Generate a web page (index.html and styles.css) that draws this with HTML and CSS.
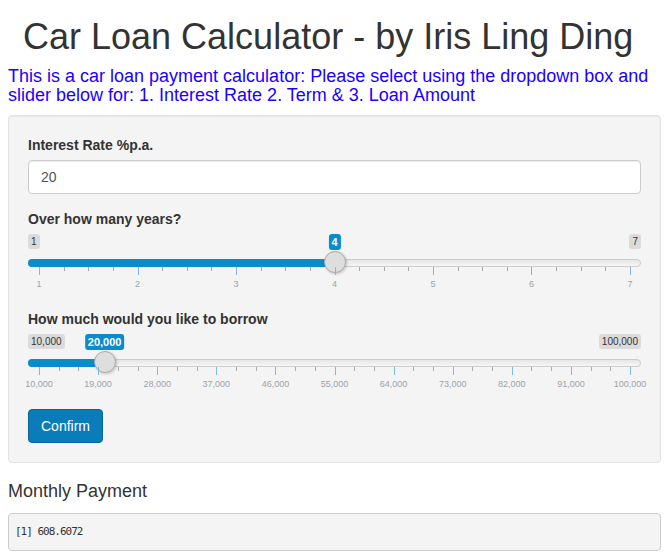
FILE: index.html
```html
<!DOCTYPE html>
<html>
<head>
<meta charset="utf-8">
<title>Car Loan Calculator</title>
<link rel="stylesheet" href="styles.css">
</head>
<body>
<div class="page">
  <h1 class="title">Car Loan Calculator - by Iris Ling Ding</h1>
  <p class="intro">This is a car loan payment calculator: Please select using the dropdown box and slider below for: 1. Interest Rate 2. Term &amp; 3. Loan Amount</p>

  <div class="well">
    <div class="form-group">
      <label class="control-label">Interest Rate %p.a.</label>
      <input class="form-control" type="text" value="20">
    </div>

    <div class="form-group">
      <label class="control-label">Over how many years?</label>
      <div class="irs" style="--p:0.5">
        <span class="irs-line"></span>
        <span class="irs-bar"></span>
        <span class="irs-min">1</span>
        <span class="irs-max">7</span>
        <span class="irs-single">4</span>
        <span class="irs-handle"></span>
        <div class="irs-grid">
          <span class="pol" style="left:0%"></span>
          <span class="pol small" style="left:4.1667%"></span>
          <span class="pol small" style="left:8.3333%"></span>
          <span class="pol small" style="left:12.5%"></span>
          <span class="pol" style="left:16.6667%"></span>
          <span class="pol small" style="left:20.8333%"></span>
          <span class="pol small" style="left:25%"></span>
          <span class="pol small" style="left:29.1667%"></span>
          <span class="pol" style="left:33.3333%"></span>
          <span class="pol small" style="left:37.5%"></span>
          <span class="pol small" style="left:41.6667%"></span>
          <span class="pol small" style="left:45.8333%"></span>
          <span class="pol" style="left:50%"></span>
          <span class="pol small" style="left:54.1667%"></span>
          <span class="pol small" style="left:58.3333%"></span>
          <span class="pol small" style="left:62.5%"></span>
          <span class="pol" style="left:66.6667%"></span>
          <span class="pol small" style="left:70.8333%"></span>
          <span class="pol small" style="left:75%"></span>
          <span class="pol small" style="left:79.1667%"></span>
          <span class="pol" style="left:83.3333%"></span>
          <span class="pol small" style="left:87.5%"></span>
          <span class="pol small" style="left:91.6667%"></span>
          <span class="pol small" style="left:95.8333%"></span>
          <span class="pol" style="left:100%"></span>
          <span class="gtext" style="left:0%">1</span>
          <span class="gtext" style="left:16.6667%">2</span>
          <span class="gtext" style="left:33.3333%">3</span>
          <span class="gtext" style="left:50%">4</span>
          <span class="gtext" style="left:66.6667%">5</span>
          <span class="gtext" style="left:83.3333%">6</span>
          <span class="gtext" style="left:100%">7</span>
        </div>
      </div>
    </div>

    <div class="form-group">
      <label class="control-label">How much would you like to borrow</label>
      <div class="irs" style="--p:0.1111">
        <span class="irs-line"></span>
        <span class="irs-bar"></span>
        <span class="irs-min">10,000</span>
        <span class="irs-max">100,000</span>
        <span class="irs-single">20,000</span>
        <span class="irs-handle"></span>
        <div class="irs-grid">
          <span class="pol" style="left:0%"></span>
          <span class="pol small" style="left:3.3333%"></span>
          <span class="pol small" style="left:6.6667%"></span>
          <span class="pol" style="left:10%"></span>
          <span class="pol small" style="left:13.3333%"></span>
          <span class="pol small" style="left:16.6667%"></span>
          <span class="pol" style="left:20%"></span>
          <span class="pol small" style="left:23.3333%"></span>
          <span class="pol small" style="left:26.6667%"></span>
          <span class="pol" style="left:30%"></span>
          <span class="pol small" style="left:33.3333%"></span>
          <span class="pol small" style="left:36.6667%"></span>
          <span class="pol" style="left:40%"></span>
          <span class="pol small" style="left:43.3333%"></span>
          <span class="pol small" style="left:46.6667%"></span>
          <span class="pol" style="left:50%"></span>
          <span class="pol small" style="left:53.3333%"></span>
          <span class="pol small" style="left:56.6667%"></span>
          <span class="pol" style="left:60%"></span>
          <span class="pol small" style="left:63.3333%"></span>
          <span class="pol small" style="left:66.6667%"></span>
          <span class="pol" style="left:70%"></span>
          <span class="pol small" style="left:73.3333%"></span>
          <span class="pol small" style="left:76.6667%"></span>
          <span class="pol" style="left:80%"></span>
          <span class="pol small" style="left:83.3333%"></span>
          <span class="pol small" style="left:86.6667%"></span>
          <span class="pol" style="left:90%"></span>
          <span class="pol small" style="left:93.3333%"></span>
          <span class="pol small" style="left:96.6667%"></span>
          <span class="pol" style="left:100%"></span>
          <span class="gtext" style="left:0%">10,000</span>
          <span class="gtext" style="left:10%">19,000</span>
          <span class="gtext" style="left:20%">28,000</span>
          <span class="gtext" style="left:30%">37,000</span>
          <span class="gtext" style="left:40%">46,000</span>
          <span class="gtext" style="left:50%">55,000</span>
          <span class="gtext" style="left:60%">64,000</span>
          <span class="gtext" style="left:70%">73,000</span>
          <span class="gtext" style="left:80%">82,000</span>
          <span class="gtext" style="left:90%">91,000</span>
          <span class="gtext" style="left:100%">100,000</span>
        </div>
      </div>
    </div>

    <button class="btn" type="button">Confirm</button>
  </div>

  <h4 class="result-title">Monthly Payment</h4>
  <pre class="output">[1] 608.6072</pre>
</div>
</body>
</html>
```
FILE: styles.css
```css
* { box-sizing: border-box; }

body {
  margin: 0;
  font-family: "Liberation Sans", Arial, sans-serif;
  font-size: 14px;
  line-height: 1.42857;
  color: #333;
  background: #fff;
}

.page {
  padding: 0 5px 0 8px;
}

.title {
  margin: 17px 0 10px;
  padding-left: 15px;
  font-size: 36px;
  font-weight: 500;
  line-height: 1.1;
  text-align: left;
  color: #333;
}

.intro {
  margin: 0 0 10px;
  font-size: 18px;
  line-height: 19px;
  color: #1a00ff;
}

.well {
  padding: 19px;
  margin-bottom: 19px;
  background: #f4f4f4;
  border: 1px solid #e3e3e3;
  border-radius: 4px;
  box-shadow: inset 0 1px 1px rgba(0,0,0,0.05);
}

.form-group {
  margin-bottom: 15px;
}

.control-label {
  display: block;
  margin-bottom: 5px;
  font-weight: bold;
  line-height: 20px;
}

.form-control {
  display: block;
  width: 100%;
  height: 34px;
  padding: 6px 12px;
  font-family: inherit;
  font-size: 14px;
  color: #555;
  background: #fff;
  border: 1px solid #ccc;
  border-radius: 4px;
  box-shadow: inset 0 1px 1px rgba(0,0,0,0.075);
}

/* slider */
.irs {
  position: relative;
  height: 60px;
  --blue: #0a8bcc;
}

.irs-line {
  position: absolute;
  left: 0;
  right: 0;
  top: 25px;
  height: 8px;
  border: 1px solid #ccc;
  border-radius: 8px;
  background: linear-gradient(to bottom, #ddd -50%, #fff 150%);
}

.irs-bar {
  position: absolute;
  left: 0;
  top: 25px;
  height: 8px;
  width: calc(11px + var(--p) * (100% - 22px));
  background: var(--blue);
  border-radius: 8px 0 0 8px;
}

.irs-min,
.irs-max {
  position: absolute;
  top: 0;
  padding: 1px 3px;
  font-size: 10px;
  line-height: 1.333;
  color: #333;
  background: rgba(0,0,0,0.1);
  border-radius: 3px;
}
.irs-min { left: 0; }
.irs-max { right: 0; }

.irs-single {
  position: absolute;
  top: 0;
  left: calc(11px + var(--p) * (100% - 22px));
  transform: translateX(-50%);
  padding: 1px 3px;
  font-size: 11px;
  font-weight: bold;
  line-height: 1.333;
  color: #fff;
  background: var(--blue);
  border-radius: 3px;
  white-space: nowrap;
}

.irs-handle {
  position: absolute;
  top: 17px;
  left: calc(var(--p) * (100% - 22px));
  width: 22px;
  height: 22px;
  background: #dedede;
  border: 1px solid #ababab;
  border-radius: 50%;
  box-shadow: 1px 1px 3px rgba(0,0,0,0.2);
}

.irs-grid {
  position: absolute;
  left: 11px;
  right: 11px;
  top: 33px;
  height: 25px;
}

.pol {
  position: absolute;
  top: 0;
  width: 1px;
  height: 8px;
  background: #7fb9e0;
}
.pol.small {
  height: 4px;
  background: #aaa;
}

.gtext {
  position: absolute;
  top: 11px;
  transform: translateX(-50%);
  font-size: 9px;
  line-height: 12px;
  color: #9aa3aa;
  white-space: nowrap;
}

.btn {
  display: inline-block;
  height: 34px;
  padding: 6px 12px;
  font-family: inherit;
  font-size: 14px;
  line-height: 20px;
  color: #fff;
  background: #0a7cba;
  border: 1px solid #08669b;
  border-radius: 4px;
}

.result-title {
  margin: 0 0 12px;
  font-size: 18px;
  font-weight: 500;
  line-height: 1.1;
}

.output {
  margin: 0;
  padding: 9px 6px;
  font-family: "DejaVu Sans Mono", "Liberation Mono", monospace;
  font-size: 11px;
  line-height: 18px;
  letter-spacing: -1px;
  color: #333;
  background: #f4f4f4;
  border: 1px solid #ccc;
  border-radius: 4px;
}
```
